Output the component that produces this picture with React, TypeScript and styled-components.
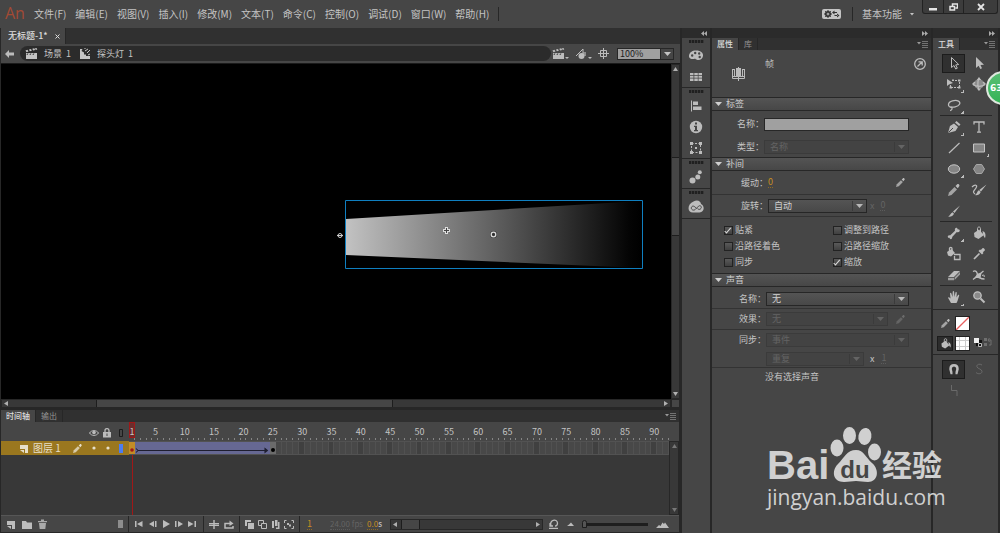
import React from 'react';
import styled, { createGlobalStyle, css } from 'styled-components';

const c = {
  panel: '#464646',
  dark: '#2b2b2b',
  strip: '#303030',
  line: '#333333',
  edge: '#272727',
  text: '#c4c4c4',
  dim: '#646464',
  icon: '#bcbcbc',
};

const Global = createGlobalStyle`
  *, *::before, *::after { box-sizing: border-box; }
  body { margin: 0; background: ${c.panel}; }
  body, button, input, select {
    font-family: "Noto Sans CJK SC", "Liberation Sans", sans-serif;
    font-size: 10px;
    line-height: 12px;
    color: ${c.text};
  }
  button { border: 0; padding: 0; background: none; }
  svg { display: block; flex: none; }
`;

const Shell = styled.div`
  position: relative;
  display: flex;
  flex-direction: column;
  min-height: 100vh;
  overflow: hidden;
  background: ${c.panel};
`;

/* ---------- menu bar ---------- */
const MenuBar = styled.header`
  display: flex;
  align-items: flex-start;
  height: 28px;
  padding-left: 5px;
`;
const Logo = styled.div`
  width: 25px;
  font: 16px/26px "Open Sans", sans-serif;
  color: #a34a34;
`;
const MenuNav = styled.nav`
  display: flex;
  height: 28px;
  flex: 1;
`;
const MenuItem = styled.button`
  padding: 0 5px 0 4px;
  height: 28px;
  white-space: nowrap;
`;
const RuleSlot = styled.span`
  display: flex;
  align-items: center;
  margin-left: 4px;
`;
const VRule = styled.span`
  width: 1px;
  height: 14px;
  background: ${c.edge};
  flex: none;
`;
const Workspace = styled.div`
  display: flex;
  align-items: center;
  gap: 9px;
  height: 28px;
  padding-right: 8px;
`;
const WorkspaceButton = styled.button`
  display: flex;
  align-items: center;
  gap: 8px;
`;
const WindowButtons = styled.div`
  display: flex;
  height: 14px;
  margin-right: 2px;
  border: 1px solid #222;
  border-top: 0;
  border-radius: 0 0 3px 3px;
  background: #3c3c3c;
`;
const WindowButton = styled.button<{ $w: number }>`
  display: flex;
  align-items: center;
  justify-content: center;
  width: ${p => p.$w}px;
  color: #e4e4e4;
  & + & { border-left: 1px solid #222; }
`;

/* ---------- main split ---------- */
const Main = styled.div`
  display: flex;
  flex: 1;
  min-height: 0;
`;
const Work = styled.main`
  display: flex;
  flex-direction: column;
  flex: 1;
  min-width: 0;
  border-left: 1px solid ${c.edge};
  background: ${c.edge};
`;
const Strip = styled.div<{ $h: number }>`
  display: flex;
  align-items: stretch;
  height: ${p => p.$h}px;
  background: ${c.strip};
`;
const Tab = styled.button<{ $on?: boolean }>`
  display: flex;
  align-items: center;
  gap: 9px;
  padding: 0 5px;
  border-right: 1px solid ${c.edge};
  background: ${p => (p.$on ? c.panel : 'transparent')};
  color: ${p => (p.$on ? '#dcdcdc' : '#949494')};
  font-weight: ${p => (p.$on ? 500 : 400)};
  font-size: 8px;
`;
const FileTab = styled(Tab)`
  gap: 7px;
  padding: 0 5px 0 7px;
  font-size: 9px;
  white-space: nowrap;
`;
const StripEnd = styled.button`
  margin-left: auto;
  padding: 0 3px;
  color: #999;
`;
const EditBar = styled.div`
  display: flex;
  align-items: center;
  height: 20px;
  padding: 0 6px 0 4px;
  gap: 6px;
  background: ${c.panel};
  border-bottom: 1px solid #1a1a1a;
  color: ${c.icon};
`;
const Crumbs = styled.div`
  display: flex;
  align-items: center;
  flex: 1;
  height: 15px;
  padding-left: 5px;
  border-radius: 8px;
  background: ${c.dark};
`;
const Crumb = styled.button`
  display: flex;
  align-items: center;
  gap: 6px;
  margin-right: 8px;
  font-size: 9px;
  white-space: pre;
`;
const EditTools = styled.div`
  display: flex;
  align-items: center;
  gap: 6px;
  margin-left: -5px;
`;
const IconButton = styled.button`
  display: flex;
  align-items: center;
  justify-content: center;
  color: ${c.icon};
`;
const Zoom = styled.div`
  display: flex;
  height: 12px;
  width: 57px;
  margin-left: 2px;
  border: 1px solid ${c.edge};
  input {
    flex: 1;
    min-width: 0;
    padding: 0 2px;
    border: 0;
    background: #a0a0a0;
    color: #1c1c1c;
    font-size: 9px;
    line-height: 10px;
    height: 10px;
  }
  button { width: 13px; display: flex; align-items: center; justify-content: center; border-left: 1px solid ${c.edge}; }
`;
const CanvasGrid = styled.div`
  display: grid;
  grid-template-columns: 1fr 9px;
  grid-template-rows: 1fr 9px;
  flex: 1;
  min-height: 200px;
`;
const Canvas = styled.div`
  position: relative;
  overflow: hidden;
  background: #000;
`;
const Beam = styled.svg`
  position: absolute;
  left: 334px;
  top: 134px;
`;
const CornerBox = styled.span`
  background: ${c.panel};
  border: 1px solid ${c.edge};
`;
const Scroll = styled.div<{ $v?: boolean; $h?: number; $w?: number }>`
  display: flex;
  flex-direction: ${p => (p.$v ? 'column' : 'row')};
  align-items: center;
  justify-content: space-between;
  ${p => p.$h && css`height: ${p.$h}px;`}
  ${p => p.$w && css`width: ${p.$w}px;`}
  padding: ${p => (p.$v ? '2px 0' : '0 2px')};
  background: #383838;
  border: 1px solid ${c.edge};
  color: #b0b0b0;
`;
const Track = styled.div<{ $v?: boolean; $before: number; $thumb: number; $after: number }>`
  display: grid;
  flex: 1;
  align-self: stretch;
  margin: ${p => (p.$v ? '0' : '0 3px')};
  ${p =>
    p.$v
      ? css`grid-template-rows: ${p.$before}fr ${p.$thumb}fr ${p.$after}fr;`
      : css`grid-template-columns: ${p.$before}fr ${p.$thumb}fr ${p.$after}fr;`}
`;
const Thumb = styled.div<{ $v?: boolean }>`
  background: #464646;
  ${p =>
    p.$v
      ? css`grid-row: 2; border: solid #1d1d1d; border-width: 1px 0;`
      : css`grid-column: 2; border: solid #1d1d1d; border-width: 0 1px;`}
`;

/* ---------- timeline ---------- */
const Timeline = styled.section`
  display: flex;
  flex-direction: column;
  margin-top: 2px;
  margin-right: 1px;
  background: ${c.panel};
`;
const TimeGrid = styled.div`
  display: grid;
  grid-template-columns: 128px 1fr 10px;
  grid-template-rows: 19px 14px 60px;
`;
const LayerHead = styled.div`
  grid-area: 1 / 1;
  display: flex;
  align-items: center;
  justify-content: flex-end;
  gap: 4px;
  padding: 2px 6px 0 0;
  color: ${c.icon};
`;
const FRAMES = 92;
const Ruler = styled.div`
  grid-area: 1 / 2;
  display: grid;
  grid-template-columns: repeat(${FRAMES}, minmax(0, 1fr));
  grid-template-rows: 16px 3px;
`;
const Mark = styled.span<{ $n: number; $now?: boolean }>`
  grid-column: ${p => p.$n};
  grid-row: 1;
  display: flex;
  justify-content: center;
  font-size: 9px;
  line-height: 20px;
  ${p => p.$now && css`box-shadow: inset 0 0 0 1px #a01818; background: #6b2d2d;`}
`;
const Tick = styled.span<{ $n: number }>`
  grid-column: ${p => p.$n};
  grid-row: 2;
  height: 2px;
  border-right: 1px solid #858585;
`;
const Layer = styled.div`
  grid-area: 2 / 1;
  display: flex;
  align-items: center;
  padding: 0 6px 0 18px;
  background: #9a771f;
  color: #e6dfca;
  gap: 4px;
  white-space: pre;
`;
const LayerName = styled.span`
  margin-right: auto;
`;
const Frames = styled.div`
  grid-area: 2 / 2;
  display: grid;
  grid-template-columns: repeat(${FRAMES}, minmax(0, 1fr));
  grid-template-rows: 12px;
  border: solid #525252;
  border-width: 1px 0;
`;
const Cell = styled.span<{ $n: number; $five: boolean }>`
  grid-column: ${p => p.$n};
  grid-row: 1;
  border-right: 1px solid #515151;
  background: ${p => (p.$five ? '#404040' : '#484848')};
`;
const Tween = styled.div`
  grid-column: 2 / 25;
  grid-row: 1;
  z-index: 1;
  display: flex;
  align-items: flex-end;
  background: #666893;
  color: #1e1e30;
  svg { flex: 1; min-width: 0; }
`;
const Key = styled.div<{ $n: number; $first?: boolean }>`
  grid-column: ${p => p.$n};
  grid-row: 1;
  z-index: 1;
  display: flex;
  align-items: flex-end;
  justify-content: center;
  padding-bottom: 2px;
  background: ${p => (p.$first ? '#c28d26' : '#6b6b6b')};
  color: ${p => (p.$first ? '#a01818' : '#000')};
`;
const Empty = styled.div`
  grid-area: 3 / 1 / 4 / 3;
  background: #383838;
  display: grid;
  grid-template-columns: 128px 1fr;
`;
const Playhead = styled.i`
  grid-column: 2;
  width: 1px;
  margin-left: 3px;
  background: #a01818;
`;
const TimeScroll = styled(Scroll)`
  grid-area: 2 / 3 / 4 / 4;
  color: #777;
`;
const Footer = styled.footer`
  display: flex;
  align-items: center;
  height: 18px;
  border-top: 1px solid #565656;
  border-bottom: 1px solid ${c.edge};
  color: ${c.icon};
`;
const FootGroup = styled.div<{ $gap: number; $pad: number; $w?: number }>`
  display: flex;
  align-items: center;
  gap: ${p => p.$gap}px;
  padding: 0 ${p => p.$pad}px;
  ${p => p.$w && css`width: ${p.$w}px;`}
  height: 16px;
  border-right: 1px solid ${c.edge};
  flex: none;
`;
const Push = styled.span`
  margin-left: auto;
`;
const Readouts = styled.div`
  display: flex;
  align-items: center;
  width: 90px;
  padding-left: 7px;
  font-size: 8px;
  color: ${c.dim};
`;
const Value = styled.span<{ $dim?: boolean; $small?: boolean }>`
  color: ${p => (p.$dim ? c.dim : '#c88e22')};
  border-bottom: 1px dotted ${p => (p.$dim ? '#5c5c5c' : '#8d6a26')};
  line-height: 10px;
  font-size: ${p => (p.$small ? 8 : 9)}px;
`;
const Fps = styled.span`
  margin: 0 4px 0 18px;
  white-space: nowrap;
`;
const Secs = styled.b`
  font-weight: 500;
  color: ${c.text};
`;
const ZoomTools = styled.div`
  display: flex;
  align-items: center;
  gap: 8px;
  margin-left: 6px;
`;
const Range = styled.input`
  appearance: none;
  width: 66px;
  height: 10px;
  margin: 0;
  background: linear-gradient(#1e1e1e, #1e1e1e) center / 100% 3px no-repeat;
  &::-webkit-slider-thumb {
    appearance: none;
    width: 5px;
    height: 8px;
    border-radius: 3px 3px 0 0;
    border: 1px solid #1e1e1e;
    background: #555;
  }
`;

/* ---------- icon dock ---------- */
const Side = styled.aside<{ $w: number }>`
  display: flex;
  flex-direction: column;
  width: ${p => p.$w}px;
  flex: none;
  background: ${c.panel};
  border-left: 2px solid ${c.edge};
`;
const Collapse = styled.button`
  height: 10px;
  display: flex;
  align-items: center;
  justify-content: flex-end;
  padding-right: 3px;
  background: ${c.dark};
  color: #aaa;
`;
const DockGroup = styled.div`
  display: flex;
  flex-direction: column;
  align-items: center;
  min-height: 30px;
  border-bottom: 1px solid ${c.edge};
`;
const Grip = styled.span`
  width: 15px;
  height: 3px;
  margin: 2px 0;
  background: repeating-linear-gradient(90deg, #202020 0 2px, #383838 2px 3px);
`;
const DockButton = styled(IconButton)`
  width: 24px;
  height: 21px;
`;

/* ---------- properties ---------- */
const PropHead = styled.div`
  display: flex;
  align-items: flex-start;
  justify-content: space-between;
  height: 47px;
  padding: 8px 5px 0 17px;
  color: ${c.icon};
`;
const PropTitle = styled.span`
  flex: 1;
  padding-left: 18px;
  font-size: 9px;
`;
const SymbolSlot = styled.span`
  padding: 9px 0 0 1px;
`;
const Section = styled.section`
  display: flex;
  flex-direction: column;
`;
const SectionHead = styled.button`
  display: flex;
  align-items: center;
  gap: 4px;
  height: 14px;
  padding-left: 3px;
  border: solid ${c.edge};
  border-width: 1px 0;
  background: linear-gradient(#545454, #474747);
  color: #cfcfcf;
  font-size: 9px;
`;
const Row = styled.div<{ $h: number; $inset?: number; $rule?: boolean }>`
  display: flex;
  align-items: center;
  height: ${p => p.$h}px;
  padding-left: ${p => p.$inset ?? 1}px;
  ${p => p.$rule && css`border-bottom: 1px solid ${c.line};`}
  font-size: 9px;
`;
const SoundRows = styled.div`
  padding-top: 2px;
`;
const Label = styled.label`
  width: 51px;
  text-align: right;
  flex: none;
`;
const TextField = styled.input`
  width: 145px;
  height: 13px;
  padding: 0 3px;
  border: 1px solid ${c.edge};
  background: #a0a0a0;
  color: #1c1c1c;
`;
const SelectBox = styled.div<{ $w: number; $off?: boolean }>`
  display: grid;
  width: ${p => p.$w}px;
  height: 14px;
  flex: none;
  border: 1px solid ${p => (p.$off ? '#3b3b3b' : '#262626')};
  background: ${p => (p.$off ? '#434343' : 'linear-gradient(#545454, #484848)')};
  color: ${p => (p.$off ? c.dim : '#b8b8b8')};
  select {
    grid-area: 1 / 1;
    appearance: none;
    border: 0;
    background: none;
    padding: 0 16px 0 5px;
    color: ${p => (p.$off ? c.dim : '#d2d2d2')};
    font-size: 9px;
    line-height: 12px;
    height: 12px;
    opacity: 1;
  }
  span {
    grid-area: 1 / 1;
    justify-self: end;
    display: flex;
    align-items: center;
    padding: 0 3px;
    margin: 1px 0;
    border-left: 1px solid #3b3b3b;
    pointer-events: none;
  }
`;
const Checks = styled.div`
  display: grid;
  grid-template-columns: 109px 1fr;
  grid-auto-rows: 16px;
  padding: 5px 0 3px 12px;
`;
const Check = styled.label`
  display: flex;
  align-items: center;
  gap: 2px;
  font-size: 9px;
`;
const Box = styled.input`
  appearance: none;
  display: grid;
  place-items: center;
  width: 9px;
  height: 9px;
  margin: 0;
  border: 1px solid #222;
  background: linear-gradient(#5a5a5a, #404040);
  &:checked::after {
    content: '';
    width: 7px;
    height: 3px;
    border: solid #dcdcdc;
    border-width: 0 0 1px 1px;
    transform: rotate(-50deg) translateY(-1px);
  }
`;
const Note = styled.p`
  margin: 3px 0 0 53px;
  font-size: 9px;
`;
const RowEnd = styled.span`
  width: 26px;
`;
const Faint = styled.span`
  color: ${c.dim};
  margin: 0 6px 0 3px;
`;
const FaintButton = styled(IconButton)`
  color: #6c6c6c;
`;
const Times = styled.span`
  margin: 0 7px 0 6px;
`;

/* ---------- tools ---------- */
const ToolGroup = styled.div`
  display: grid;
  grid-template-columns: 25px 25px;
  grid-auto-rows: 20px;
  row-gap: 1px;
  justify-content: start;
  align-items: center;
  margin: 0 6px 0 7px;
  padding: 1px 0 0 1px;
  border-bottom: 1px solid ${c.edge};
`;
const ToolButton = styled(IconButton)<{ $on?: boolean }>`
  position: relative;
  width: 21px;
  height: 17px;
  justify-self: center;
  ${p => p.$on && css`background: #303030; box-shadow: 0 0 0 1px #1c1c1c;`}
`;
const Corner = styled.i`
  position: absolute;
  right: 0;
  bottom: 0;
  width: 3px;
  height: 3px;
  background: linear-gradient(135deg, transparent 50%, #bbb 50%);
`;
const Badge = styled.div`
  position: absolute;
  top: 71px;
  right: -20px;
  width: 34px;
  height: 34px;
  padding: 8px 0 0 2px;
  border: 2px solid #dfe8df;
  border-radius: 50%;
  background: linear-gradient(#58bf74, #35b356);
  color: #fff;
  font: bold 9px/14px "DejaVu Sans", sans-serif;
`;
const ToolSide = styled(Side)`
  border-right: 2px solid ${c.edge};
`;
const ToolList = styled.div`
  display: flex;
  flex-direction: column;
  padding-top: 2px;
  border-bottom: 1px solid ${c.edge};
  > :last-child { border-bottom: 0; padding-bottom: 2px; }
`;
const Swatches = styled.div`
  display: grid;
  grid-template-columns: 15px 15px 22px;
  grid-auto-rows: 20px;
  align-items: center;
  column-gap: 2px;
  padding: 3px 0 1px 5px;
  border-bottom: 1px solid ${c.edge};
  color: ${c.icon};
`;
const Swatch = styled.button`
  width: 15px;
  height: 15px;
  border: 1px solid #222;
  background: #fff;
`;
const FillIcon = styled(IconButton)<{ $on?: boolean }>`
  width: 14px;
  height: 13px;
  ${p => p.$on && css`background: #2c2c2c; box-shadow: 0 0 0 1px #1c1c1c;`}
`;
const Options = styled(ToolGroup)`
  padding-top: 4px;
  border: 0;
  button:not(:first-child) { color: #6a6a6a; }
`;

/* ---------- watermark ---------- */
const Watermark = styled.div`
  position: absolute;
  right: 53px;
  bottom: 22px;
  width: 180px;
  color: #d0d0d0;
  pointer-events: none;
`;
const MarkTop = styled.div`
  display: flex;
  align-items: flex-end;
  height: 58px;
`;
const MarkBai = styled.span`
  width: 62px;
  font: bold 40px/36px "Liberation Sans", sans-serif;
`;
const MarkPaw = styled.div`
  display: grid;
  width: 52px;
  margin-right: 1px;
  > * { grid-area: 1 / 1; }
`;
const MarkDu = styled.span`
  align-self: end;
  justify-self: center;
  color: ${c.panel};
  font: bold 24px/26px "Liberation Sans", sans-serif;
`;
const MarkCn = styled.span`
  font-size: 30px;
  line-height: 40px;
  font-weight: 700;
`;
const MarkUrl = styled.div`
  font: 21px/28px "Open Sans", sans-serif;
  white-space: nowrap;
`;

/* ---------- icons ---------- */
type IcoProps = { w?: number; h?: number; children: React.ReactNode };
const Ico = ({ w = 16, h = 16, children }: IcoProps) => (
  <svg width={w} height={h} viewBox={`0 0 ${w} ${h}`} fill="currentColor" aria-hidden="true">
    {children}
  </svg>
);
const S = { fill: 'none', stroke: 'currentColor' } as const;

const Down = () => <Ico w={7} h={4}><path d="M0 0h7L3.500 4z" /></Ico>;
const Tri = ({ d }: { d: 'l' | 'r' | 'u' | 'd' }) => (
  <Ico w={5} h={5}>
    <path d={{ l: 'M4 0v5L0 2.500z', r: 'M1 0v5l4-2.500z', u: 'M0 4h5L2.500 0z', d: 'M0 1h5L2.500 5z' }[d]} />
  </Ico>
);
const MenuGlyph = () => (
  <Ico w={11} h={8}><path d="M0 2h4L2 4.500z" /><path {...S} d="M5 1.500h6M5 3.500h6M5 5.500h6M5 7.500h6" strokeWidth=".8" opacity=".8" /></Ico>
);
const Chevrons = ({ left }: { left?: boolean }) => (
  <Ico w={6} h={5}><path d={left ? 'M3 0v5L0 2.500zM6 0v5L3 2.500z' : 'M0 0v5l3-2.500zM3 0v5l3-2.500z'} /></Ico>
);
const Clapper = ({ menu }: { menu?: boolean }) => (
  <Ico w={menu ? 17 : 13} h={12}>
    <path d="M1 5h11v6H1zM.5 2.500l2-.8 1 1.800-2 .7zM4 1.600l2-.6.8 1.800-2 .5zM7.300.8l2-.5.8 1.800-2 .5z" />
    <path d="M10 .2l1.500-.2.8 1.600-1.600.5z" />
    <path d="M2 5.500h1.500l-1 1.500H1.500zM5 5.500h1.500l-1 1.500H4.500zM8 5.500h1.500l-1 1.500H7.500z" fill="#444" />
    {menu && <path d="M13 9h4l-2 2z" />}
  </Ico>
);
const Pencil = ({ size = 11 }: { size?: number }) => (
  <svg width={size} height={size} viewBox="0 0 11 11" fill="currentColor" aria-hidden="true">
    <path d="M0 11l1-3.500L6 2.600l2.400 2.400-5 5z" opacity=".8" />
    <path d="M7 1.800L8.300.5c.6-.6 1.300-.6 1.900 0s.6 1.300 0 1.900L9 4z" />
  </svg>
);
const NewLayer = () => <Ico w={10} h={9}><path d="M1 1h8v8H6V5H1z" /><path d="M1 6h4v3z" /></Ico>;
const Dot = ({ r = 2 }: { r?: number }) => <Ico w={4} h={4}><circle cx="2" cy="2" r={r} /></Ico>;

const toolArt: Record<string, React.ReactNode> = {
  select: <path {...S} d="M5.500 2.500v10l2.500-2 1.700 3.500 1.600-.8-1.600-3.300 3-.4z" />,
  subselect: <path d="M5 2v11l2.600-2.200L9.300 14l1.700-.8L9.500 10l3.500-.3z" />,
  transform: <><path d="M1 3v7l2-1.600L7 7z" /><path {...S} d="M6 4.500h7.500v7h-9V9" strokeDasharray="2 1" /><path d="M12 3.500h2.500v2H12zM12 10.500h2.500v2H12zM3.500 10.500H6v2H3.500zM6 3.500h2v1.500H6z" /></>,
  rotate3d: <><circle cx="8" cy="8" r="4.800" fill="#8c8c8c" /><path {...S} strokeWidth="1.200" d="M2 8.500c3 2.600 9 2.600 12 0M8 2c-1.500 3-1.500 9 0 12M2 8l2-2M14 8l-2-2" /><path d="M8 1l2.200 3H5.800zM8 15l2.200-2.500H5.800zM1 8l2.500-2v4zM15 8l-2.500-2v4z" /></>,
  lasso: <path {...S} strokeWidth="1.300" d="M6 10.500C1 10 1.500 5 6.500 3.800s8.500.8 7 3.400-7 3.800-9 2.300M5 10c2 1 1 3.500-1 3.500" />,
  pen: <><path d="M2 14l2-7 4-2.500 4 3.600L9.500 12z" /><path d="M9 3.500L10.500 2l4 3.500L13 7z" /><path d="M2.500 13.500L7 9" stroke={c.panel} /></>,
  text: <path {...S} strokeWidth="1.300" d="M3 5.500V3h10v2.500M8 3v10M6 13.200h4" />,
  line: <path {...S} strokeWidth="1.200" d="M3 13L13.500 3" />,
  rect: <path d="M2.500 4h11v8h-11z" fill="#858585" stroke="#c4c4c4" />,
  oval: <ellipse cx="8" cy="8" rx="5.700" ry="4.200" fill="#858585" stroke="#c4c4c4" />,
  poly: <path d="M5.300 3.500h5.400L13.500 8l-2.800 4.500H5.300L2.500 8z" fill="#858585" stroke="#a8a8a8" />,
  pencil: <><path d="M2 14l1-3.500L8.500 5 11 7.500 5.500 13z" opacity=".8" /><path d="M9.500 4l1.500-1.500c.7-.7 1.500-.5 2 0s.7 1.300 0 2L11.800 6.300z" /></>,
  paint: <><path {...S} strokeWidth="1.300" d="M1 5c3-3 6-2 4 1s-4 4-1 6" /><path d="M15.500 2.500L10 9.500 8.300 8zM7.800 8.300l1.900 1.700c-1 2.700-3.700 3.700-5.700 3 2-.8 2-3.700 3.800-4.700z" /></>,
  brush: <path d="M14 2.500L8.500 10 7 8.500zM6.500 9.300L8 10.700C7 13 4.500 14 2 13.500c2-.8 2.500-3 4.500-4.200z" />,
  bone: <path d="M2 12.500c-.8-1.500.6-2.600 2-2L9 5.800c-.6-2 .6-3.600 2-2.800.4.300.6.800.6 1.300 1.500-.3 2.600.7 2 2-.6 1-2 1-2.800.6L6.200 12c.3 1.500-1 2.500-2 2-.5-.3-.6-.7-.6-1.200-.5.200-1.100.2-1.600-.3z" />,
  bucket: <><path d="M3 8l5-3.500 5 5.500L7.500 14 3.500 12z" /><path {...S} d="M6.500 7V3.500c0-2 3-2 3 0V7" /><path d="M11.500 6c3 1 3.500 4 2.500 7-1-1-1.500-2.500-2-4z" /></>,
  ink: <><path d="M1 6l4.500-3L9 7l-4 3.500-3-1z" /><path {...S} d="M3.500 5V2.500c0-1.500 2.500-1.500 2.500 0V5M8 8.500h6v5H8.500V10" strokeWidth="1.300" /></>,
  dropper: <><path {...S} strokeWidth="1.700" d="M3 13l5.500-5.500" /><path d="M7.500 5L11 8.500l1.500-1.500-.7-.8 2-1.700c.7-1-1.300-3-2.300-2.300L9.800 4l-.8-.5z" /></>,
  eraser: <><path d="M2 10l6-6h6l-6 6z" /><path d="M2 10.700h6v2.600H2zM8.600 10.500L14 5v2.500l-5.400 5.600z" opacity=".75" /></>,
  width: <><path {...S} strokeWidth="1.300" d="M2 4.500c3-2 4 1 4.500 3S9 12 13.500 12M2 12.500L12.500 4" /><path d="M6 7c2-1.500 3 0 4.500-1L9.500 11C7 12 6 10 3 12z" /><path {...S} d="M11 8.500c2-1 3 0 2 1.500" /></>,
  hand: <path d="M5 14L2 8.700c.3-.9 1.300-.6 2.500.8L4 4.500c.2-.9 1.100-.8 1.400 0L6.500 8 6.700 2.700c.2-.9 1.200-.9 1.400 0L8.500 8l1-4.600c.3-.8 1.200-.6 1.300.2L10.500 8.500 12 6c.5-.7 1.300-.3 1.200.5L11.500 12 10.500 14z" />,
  zoom: <><circle cx="6.500" cy="6.500" r="3.700" fill="#8a8a8a" stroke="#c0c0c0" strokeWidth="1.300" /><path {...S} strokeWidth="2" d="M9.500 9.500l4 4" /></>,
  magnet: <path {...S} strokeWidth="2.500" d="M6.500 12H5.500L4.500 8c0-5 7-5 7 0l-1 4H9.500" />,
  smooth: <path {...S} d="M11 4C8 2 5 4 6 6s5 2 5 4.500-4 3-6 1" />,
  straight: <path {...S} d="M5.500 3v5.500H11V14" />,
};
const Tool = ({ n, on, more }: { n: string; on?: boolean; more?: boolean }) => (
  <ToolButton $on={on} aria-label={n}>
    <Ico>{toolArt[n]}</Ico>
    {more && <Corner />}
  </ToolButton>
);

const dock: React.ReactNode[][] = [
  [
    <Ico><path fillRule="evenodd" d="M8 2.500c5 0 7.500 2.500 7 5.500S12 12.500 9.500 12 8 10.500 6 11 .5 10.500 1 7.500 4 2.500 8 2.500zM3 7.500a1.200 1.200 0 102.400 0 1.200 1.200 0 10-2.400 0zM6 5a1.200 1.200 0 102.400 0 1.200 1.200 0 10-2.400 0zM10 5.500a1.200 1.200 0 102.400 0 1.200 1.200 0 10-2.400 0zM10.500 9a1.200 1.200 0 102.400 0 1.200 1.200 0 10-2.400 0z" /></Ico>,
    <Ico><path d="M2 4h3.500v2H2zM6.300 4h3.500v2H6.300zM10.500 4H14v2h-3.500zM2 6.700h3.500v2H2zM6.300 6.700h3.500v2H6.300zM10.500 6.700H14v2h-3.500zM2 9.500h3.500V12H2zM6.300 9.500h3.500V12H6.300zM10.500 9.500H14V12h-3.500z" /></Ico>,
  ],
  [
    <Ico><path d="M3 2.500h1v11H3zM5 3.500h5v3.500H5zM5 8.500h8.500V12H5z" /></Ico>,
    <Ico><circle cx="8" cy="8" r="6.200" /><path d="M7 3.500h2v2H7zM6 6.700h3V11h1v1.200H6V11h1V8H6z" fill={c.panel} /></Ico>,
    <Ico><path {...S} d="M3.500 3.500h9v9h-9z" strokeDasharray="2 1.500" /><path d="M2 2h3v3H2zM11 2h3v3h-3zM2 11h3v3H2zM11 11h3v3h-3zM7 7h2v2H7z" /></Ico>,
  ],
  [<Ico><circle cx="4.500" cy="11.500" r="3" /><circle cx="9.800" cy="8" r="2.500" /><circle cx="11.800" cy="3.200" r="2" /></Ico>],
  [
    <Ico>
      <path d="M5.500 2.500C10 0 13 3 13 5c4 2 3.500 8-1.500 8.500H5C-1.500 13.500-.5 4.500 5.500 2.500z" />
      <path d="M8.500 9.500C6.500 7 4.500 6.300 3.500 8.200s1.700 4 3.700 2.300l3.300-3.300c2-1.500 3.500.6 2.500 2.200s-2.700 1-3.500.2" fill="none" stroke={c.panel} />
    </Ico>,
  ],
];

const Select = ({ id, w, off, value }: { id: string; w: number; off?: boolean; value: string }) => (
  <SelectBox $w={w} $off={off}>
    <select id={id} disabled={off} defaultValue={value}><option>{value}</option></select>
    <span><Down /></span>
  </SelectBox>
);

const menus = ['文件(F)', '编辑(E)', '视图(V)', '插入(I)', '修改(M)', '文本(T)', '命令(C)', '控制(O)', '调试(D)', '窗口(W)', '帮助(H)'];
const frames = Array.from({ length: FRAMES }, (_, i) => i + 1);
const marks = [1, ...Array.from({ length: 18 }, (_, i) => (i + 1) * 5)];
const checks: [string, boolean][] = [['贴紧', true], ['调整到路径', false], ['沿路径着色', false], ['沿路径缩放', false], ['同步', false], ['缩放', true]];

const TimelinePanel = () => (
  <Timeline>
    <Strip $h={12}>
      <Tab $on>时间轴</Tab>
      <Tab>输出</Tab>
      <StripEnd aria-label="面板菜单"><MenuGlyph /></StripEnd>
    </Strip>
    <TimeGrid>
      <LayerHead>
        <Ico w={10} h={8}><path {...S} d="M.5 4C2.500.8 7.500.8 9.500 4 7.500 7.200 2.500 7.200.5 4z" /><circle cx="5" cy="3.500" r="1.800" /></Ico>
        <Ico w={8} h={10}><path d="M0 4h8v5.500H0z" /><path {...S} strokeWidth="1.300" d="M2 4V2.500C2 0 6 0 6 2.500V4" /><path d="M3.500 5.500h1v2.500h-1z" fill={c.panel} /></Ico>
        <Ico w={8} h={10}><path d="M4.500 1.500h3v7h-3z" fill="none" stroke="#1c1c1c" /></Ico>
      </LayerHead>
      <Ruler>
        {marks.map(n => <Mark key={n} $n={n} $now={n === 1}>{n}</Mark>)}
        {frames.map(n => <Tick key={n} $n={n} />)}
      </Ruler>
      <Layer>
        <NewLayer />
        <LayerName>图层 1</LayerName>
        <Pencil size={9} />
        <Ico w={10} h={4}><circle cx="8" cy="2" r="1.600" /></Ico>
        <Ico w={10} h={4}><circle cx="8" cy="2" r="1.600" /></Ico>
        <Ico w={9} h={9}><path d="M5 0h4v9H5z" fill="#4d7df0" /></Ico>
      </Layer>
      <Frames>
        {frames.map(n => <Cell key={n} $n={n} $five={n % 5 === 0} />)}
        <Key $n={1} $first><Dot r={1.800} /></Key>
        <Tween>
          <svg height="7" preserveAspectRatio="none" viewBox="0 0 134 7" fill="none" stroke="currentColor">
            <path d="M1 1.500L3 3.500 1 5.500M3 3.500h128M129 1.500l2.500 2-2.500 2z" />
          </svg>
        </Tween>
        <Key $n={25}><Dot /></Key>
      </Frames>
      <TimeScroll $v><Tri d="u" /><Tri d="d" /></TimeScroll>
      <Empty><Playhead /></Empty>
    </TimeGrid>
    <Footer>
      <FootGroup $gap={6} $pad={5} $w={128}>
        <IconButton aria-label="新建图层"><NewLayer /></IconButton>
        <IconButton aria-label="新建文件夹"><Ico w={10} h={9}><path d="M0 1h4l1 1.500h5V9H0z" /></Ico></IconButton>
        <IconButton aria-label="删除"><Ico w={9} h={10}><path d="M0 2h9v1.300H0zM3 .5h3V2H3zM1 4h7l-.7 6H1.700z" opacity=".85" /></Ico></IconButton>
        <Push><Ico w={5} h={8}><path d="M0 0h5v8H0z" opacity=".6" /></Ico></Push>
      </FootGroup>
      <FootGroup $gap={5} $pad={6}>
        <IconButton aria-label="第一帧"><Ico w={9} h={8}><path d="M0 1h1.500v6H0zM7.500 1v6L2 4z" /></Ico></IconButton>
        <IconButton aria-label="后退一帧"><Ico w={8} h={8}><path d="M5 1v6L0 4zM6 1h1.500v6H6z" /></Ico></IconButton>
        <IconButton aria-label="播放"><Ico w={8} h={8}><path d="M1 0v8l7-4z" /></Ico></IconButton>
        <IconButton aria-label="前进一帧"><Ico w={8} h={8}><path d="M0 1h1.500v6H0zM3 1v6l5-3z" /></Ico></IconButton>
        <IconButton aria-label="最后一帧"><Ico w={9} h={8}><path d="M0 1v6l5.500-3zM6.500 1H8v6H6.500z" /></Ico></IconButton>
      </FootGroup>
      <FootGroup $gap={5} $pad={5}>
        <IconButton aria-label="居中帧"><Ico w={10} h={9}><path d="M0 3h10v1.500H0zM0 5h10v1H0zM4.300 0h1.400v9H4.300z" /></Ico></IconButton>
        <IconButton aria-label="循环"><Ico w={10} h={9}><path {...S} strokeWidth="1.500" d="M9 6v2H1V3.500h5" /><path d="M5.500 .5L9.500 3.500 5.500 6z" /></Ico></IconButton>
      </FootGroup>
      <FootGroup $gap={4} $pad={5}>
        <IconButton aria-label="绘图纸外观"><Ico w={9} h={9}><path d="M0 0h6v2H2v4H0z" /><path d="M3 3h6v6H3z" /></Ico></IconButton>
        <IconButton aria-label="绘图纸外观轮廓"><Ico w={9} h={9}><path {...S} d="M3 5.500H.5v-5h5V3M3.500 3.500h5v5h-5z" /></Ico></IconButton>
        <IconButton aria-label="编辑多个帧"><Ico w={9} h={9}><path d="M1 1h2v7H1zM4 0h2.500v6H4zM7 2h1.500v7H5V7.500h2z" /></Ico></IconButton>
        <IconButton aria-label="修改标记"><Ico w={10} h={9}><path {...S} d="M2.500 .5H.5v2.500M.5 6v2.500H2.500M7.500 .5h2v2.500M9.500 6v2.500h-2" /><path d="M3 3h2v2H3zM5 4.500h2v2H5z" /></Ico></IconButton>
      </FootGroup>
      <Readouts>
        <Value>1</Value>
        <Fps><Value $dim $small>24.00</Value> fps</Fps>
        <Value $small>0.0</Value><Secs>s</Secs>
      </Readouts>
      <Scroll $h={11} $w={153}>
        <Tri d="l" /><Track $before={0} $thumb={19} $after={115}><Thumb /></Track><Tri d="r" />
      </Scroll>
      <ZoomTools>
        <IconButton aria-label="重置缩放"><Ico w={10} h={10}><path {...S} strokeWidth="1.300" d="M4 7H1V4M2 6.500C0 1 8-1 8.500 4c0 2-1 3-2.500 3M0 9.500h9" /></Ico></IconButton>
        <IconButton aria-label="缩小帧"><Ico w={7} h={4}><path d="M0 4l2-1.500L4 .5 7 4z" /></Ico></IconButton>
        <Range type="range" defaultValue={0} aria-label="帧缩放" />
        <IconButton aria-label="放大帧"><Ico w={13} h={7}><path d="M0 7l3-3 1.500 1L6.500 1.500 8 3l1-1.500L13 7z" /></Ico></IconButton>
      </ZoomTools>
    </Footer>
  </Timeline>
);

const Properties = () => (
  <Side $w={221}>
    <Collapse aria-label="折叠"><Chevrons /></Collapse>
    <Strip $h={12}>
      <Tab $on>属性</Tab>
      <Tab>库</Tab>
      <StripEnd aria-label="面板菜单"><MenuGlyph /></StripEnd>
    </Strip>
    <PropHead>
      <SymbolSlot>
        <Ico w={17} h={14}>
          <path {...S} d="M2.500 2v9.500h12V2M2 9.500h13M4.500 2v7M12.500 2v7M2 2.500h3M12 2.500h3" />
          <path d="M6 1h2v8H6zM9 1h2v8H9zM8 0h1v14H8z" />
        </Ico>
      </SymbolSlot>
      <PropTitle>帧</PropTitle>
      <IconButton aria-label="帮助">
        <Ico w={12} h={12}><circle cx="6" cy="6" r="5.300" {...S} strokeWidth="1.300" /><path {...S} strokeWidth="1.300" d="M3.500 8.500L8 4M4.500 3.800H8.200V7.500" /></Ico>
      </IconButton>
    </PropHead>
    <Section>
      <SectionHead><Down />标签</SectionHead>
      <Row $h={26}><Label htmlFor="name">名称：</Label><TextField id="name" /></Row>
      <Row $h={20}><Label htmlFor="kind">类型：</Label><Select id="kind" w={145} off value="名称" /></Row>
    </Section>
    <Section>
      <SectionHead><Down />补间</SectionHead>
      <Row $h={24} $inset={5} $rule>
        <Label as="span">缓动：</Label><Value>0</Value><Push /><IconButton aria-label="编辑缓动"><Pencil size={9} /></IconButton><RowEnd />
      </Row>
      <Row $h={22} $inset={5} $rule>
        <Label htmlFor="rot">旋转：</Label><Select id="rot" w={99} value="自动" /><Faint>x</Faint><Value $dim>0</Value>
      </Row>
      <Checks>
        {checks.map(([t, on]) => <Check key={t}><Box type="checkbox" defaultChecked={on} />{t}</Check>)}
      </Checks>
    </Section>
    <Section>
      <SectionHead><Down />声音</SectionHead>
      <SoundRows>
        <Row $h={20} $inset={3} $rule><Label htmlFor="snd">名称：</Label><Select id="snd" w={143} value="无" /></Row>
        <Row $h={21} $inset={3} $rule>
          <Label htmlFor="fx">效果：</Label><Select id="fx" w={122} off value="无" />
          <Push /><FaintButton aria-label="编辑声音封套"><Pencil size={9} /></FaintButton><RowEnd />
        </Row>
        <Row $h={20} $inset={3}><Label htmlFor="sync">同步：</Label><Select id="sync" w={143} off value="事件" /></Row>
        <Row $h={18} $inset={3} $rule>
          <Label htmlFor="loop" aria-label="重复方式" /><Select id="loop" w={98} off value="重复" /><Times>x</Times><Value $dim>1</Value>
        </Row>
      </SoundRows>
      <Note>没有选择声音</Note>
    </Section>
  </Side>
);

const Tools = () => (
  <ToolSide $w={69}>
    <Collapse aria-label="折叠"><Chevrons /></Collapse>
    <Strip $h={12}>
      <Tab $on>工具</Tab>
      <StripEnd aria-label="面板菜单"><MenuGlyph /></StripEnd>
    </Strip>
    <ToolList>
      <ToolGroup><Tool n="select" on /><Tool n="subselect" /><Tool n="transform" more /><Tool n="rotate3d" /><Tool n="lasso" more /></ToolGroup>
      <ToolGroup><Tool n="pen" more /><Tool n="text" /><Tool n="line" /><Tool n="rect" more /><Tool n="oval" more /><Tool n="poly" /><Tool n="pencil" /><Tool n="paint" /><Tool n="brush" /></ToolGroup>
      <ToolGroup><Tool n="bone" more /><Tool n="bucket" /><Tool n="ink" /><Tool n="dropper" /><Tool n="eraser" /><Tool n="width" /></ToolGroup>
      <ToolGroup><Tool n="hand" more /><Tool n="zoom" /></ToolGroup>
    </ToolList>
    <Swatches>
      <FillIcon aria-label="笔触"><Pencil size={9} /></FillIcon>
      <Swatch aria-label="笔触颜色"><Ico w={13} h={13}><path d="M0 13L13 0" stroke="#e86060" strokeWidth="1.300" /></Ico></Swatch>
      <span />
      <FillIcon $on aria-label="填充"><svg width="13" height="13" viewBox="0 0 16 16" fill="currentColor">{toolArt.bucket}</svg></FillIcon>
      <Swatch aria-label="填充颜色"><Ico w={13} h={13}><path d="M3.500 0v13M9.500 0v13M0 3.500h13M0 9.500h13" stroke="#ccc" /></Ico></Swatch>
      <Ico w={22} h={12}><path d="M4 3h6v6H4z" fill="#111" /><path d="M2 1h5v5H2z" fill="#eee" /><path d="M6.500 6.500h3v3h-3z" {...S} /><g opacity=".35"><path d="M12 1h3v3h-3zM12 6h3v3h-3z" /><path {...S} d="M16 3h3v5h-2M17.500 1L16 3l1.500 2" /></g></Ico>
    </Swatches>
    <Options><Tool n="magnet" on /><Tool n="smooth" /><Tool n="straight" /></Options>
  </ToolSide>
);

export default function App() {
  return (
    <Shell>
      <Global />
      <MenuBar>
        <Logo>An</Logo>
        <MenuNav>
          {menus.map(m => <MenuItem key={m}>{m}</MenuItem>)}
          <RuleSlot><VRule /></RuleSlot>
        </MenuNav>
        <Workspace>
          <Ico w={22} h={11}>
            <rect x="1" y="0" width="19" height="10" rx="2" />
            <circle cx="7" cy="5" r="2.300" fill="none" stroke="#333" strokeWidth="1.500" />
            <path d="M7 1v8M3 5h8M4.200 2.200l5.600 5.600M9.800 2.200L4.200 7.800" stroke="#333" />
            <circle cx="7" cy="5" r="1" />
            <path d="M11 3.500l2.500-2v4zM13 3h3v1h-3zM18.500 6.500l-2.500-2v4zM13.500 6h3v1h-3z" fill="#333" />
          </Ico>
          <VRule />
          <WorkspaceButton>基本功能 <Ico w={4} h={3}><path d="M0 0h4L2 2.500z" /></Ico></WorkspaceButton>
        </Workspace>
        <WindowButtons>
          <WindowButton $w={20} aria-label="最小化"><Ico w={8} h={8}><path d="M0 5h8v2.500H0z" /></Ico></WindowButton>
          <WindowButton $w={20} aria-label="还原"><Ico w={9} h={8}><path {...S} strokeWidth="1.500" d="M3.500 3V1h5v4H6.500M1 3.500h4.500V7H1z" /></Ico></WindowButton>
          <WindowButton $w={34} aria-label="关闭"><Ico w={8} h={8}><path {...S} strokeWidth="1.800" d="M1 1l6 6M7 1L1 7" /></Ico></WindowButton>
        </WindowButtons>
      </MenuBar>
      <Main>
        <Work>
          <Strip $h={16}>
            <FileTab $on>无标题-1* <Ico w={5} h={5}><path {...S} d="M.5.5l4 4M4.500.5l-4 4" /></Ico></FileTab>
          </Strip>
          <EditBar>
            <IconButton aria-label="返回"><Ico w={9} h={8}><path d="M0 4l4-4v2.500h5v3H4V8z" /></Ico></IconButton>
            <Crumbs>
              <Crumb><Clapper />场景  1</Crumb>
              <Crumb><Ico w={12} h={11}><path d="M1 1h2.500l-1 2L5 4.500v2h2V8h4v3H1z" /><path {...S} d="M6 3l3-2M8 5l3-3M5.500.5h1M9 7l2-1" /></Ico>探头灯  1</Crumb>
            </Crumbs>
            <EditTools>
              <IconButton aria-label="编辑场景"><Clapper menu /></IconButton>
              <IconButton aria-label="编辑元件"><Ico w={17} h={12}><path {...S} d="M1 8L8 1v6" /><circle cx="6.500" cy="8" r="3" /><path d="M8 4h3v4H9z" opacity=".6" /><path d="M13 9h4l-2 2z" /></Ico></IconButton>
              <IconButton aria-label="舞台居中"><Ico w={11} h={11}><path {...S} d="M2.500 2.500h6v6h-6zM5.500 0v11M0 5.500h11" /></Ico></IconButton>
              <Zoom><input defaultValue="100%" aria-label="缩放比例" /><button aria-label="选择比例"><Down /></button></Zoom>
            </EditTools>
          </EditBar>
          <CanvasGrid>
            <Canvas>
              <Beam width="312" height="74" viewBox="0 0 312 74">
                <defs>
                  <linearGradient id="beam">
                    <stop offset="0" stopColor="#c2c2c2" />
                    <stop offset=".5" stopColor="#606060" />
                    <stop offset=".96" stopColor="#040404" />
                    <stop offset="1" stopColor="#000" />
                  </linearGradient>
                </defs>
                <path d="M11 21L306 3v67L11 57z" fill="url(#beam)" />
                <path d="M10.500 2.500h297v68h-297z" fill="none" stroke="#0f7fc0" />
                <circle cx="5" cy="37.500" r="2" fill="none" stroke="#ccc" /><path d="M2 37.500h6" stroke="#ccc" />
                <path d="M111.500 29v7M108 32.500h7" stroke="#ddd" strokeWidth="3" /><path d="M111.500 30v5M109 32.500h5" stroke="#444" />
                <circle cx="158.500" cy="36.500" r="3.500" fill="#333" /><circle cx="158.500" cy="36.500" r="2.300" fill="#333" stroke="#ddd" strokeWidth="1.300" />
              </Beam>
            </Canvas>
            <Scroll $v><Tri d="u" /><Track $v $before={85} $thumb={78} $after={155}><Thumb $v /></Track><Tri d="d" /></Scroll>
            <Scroll><Tri d="l" /><Track $before={84} $thumb={298} $after={268}><Thumb /></Track><Tri d="r" /></Scroll>
            <CornerBox />
          </CanvasGrid>
          <TimelinePanel />
        </Work>
        <Side $w={30}>
          <Collapse aria-label="展开"><Chevrons left /></Collapse>
          {dock.map((g, i) => (
            <DockGroup key={i}><Grip />{g.map((ic, j) => <DockButton key={j} aria-label={`面板 ${i + 1}-${j + 1}`}>{ic}</DockButton>)}</DockGroup>
          ))}
        </Side>
        <Properties />
        <Tools />
      </Main>
      <Badge>63</Badge>
      <Watermark>
        <MarkTop>
          <MarkBai>Bai</MarkBai>
          <MarkPaw>
            <Ico w={52} h={57}>
              <ellipse cx="8" cy="22" rx="6.500" ry="8.500" /><ellipse cx="20.500" cy="9.500" rx="6.500" ry="8.500" />
              <ellipse cx="36" cy="10.500" rx="6.500" ry="8.500" transform="rotate(10 36 10)" /><ellipse cx="45.500" cy="26" rx="6.500" ry="8.500" />
              <path d="M27 24c8 0 10 8 16 13 8 7 6 19-4 19-5 0-8-1-12-1s-7 1-12 1c-11 0-13-11-6-18 6-6 9-14 18-14z" />
            </Ico>
            <MarkDu>du</MarkDu>
          </MarkPaw>
          <MarkCn>经验</MarkCn>
        </MarkTop>
        <MarkUrl>jingyan.baidu.com</MarkUrl>
      </Watermark>
    </Shell>
  );
}
